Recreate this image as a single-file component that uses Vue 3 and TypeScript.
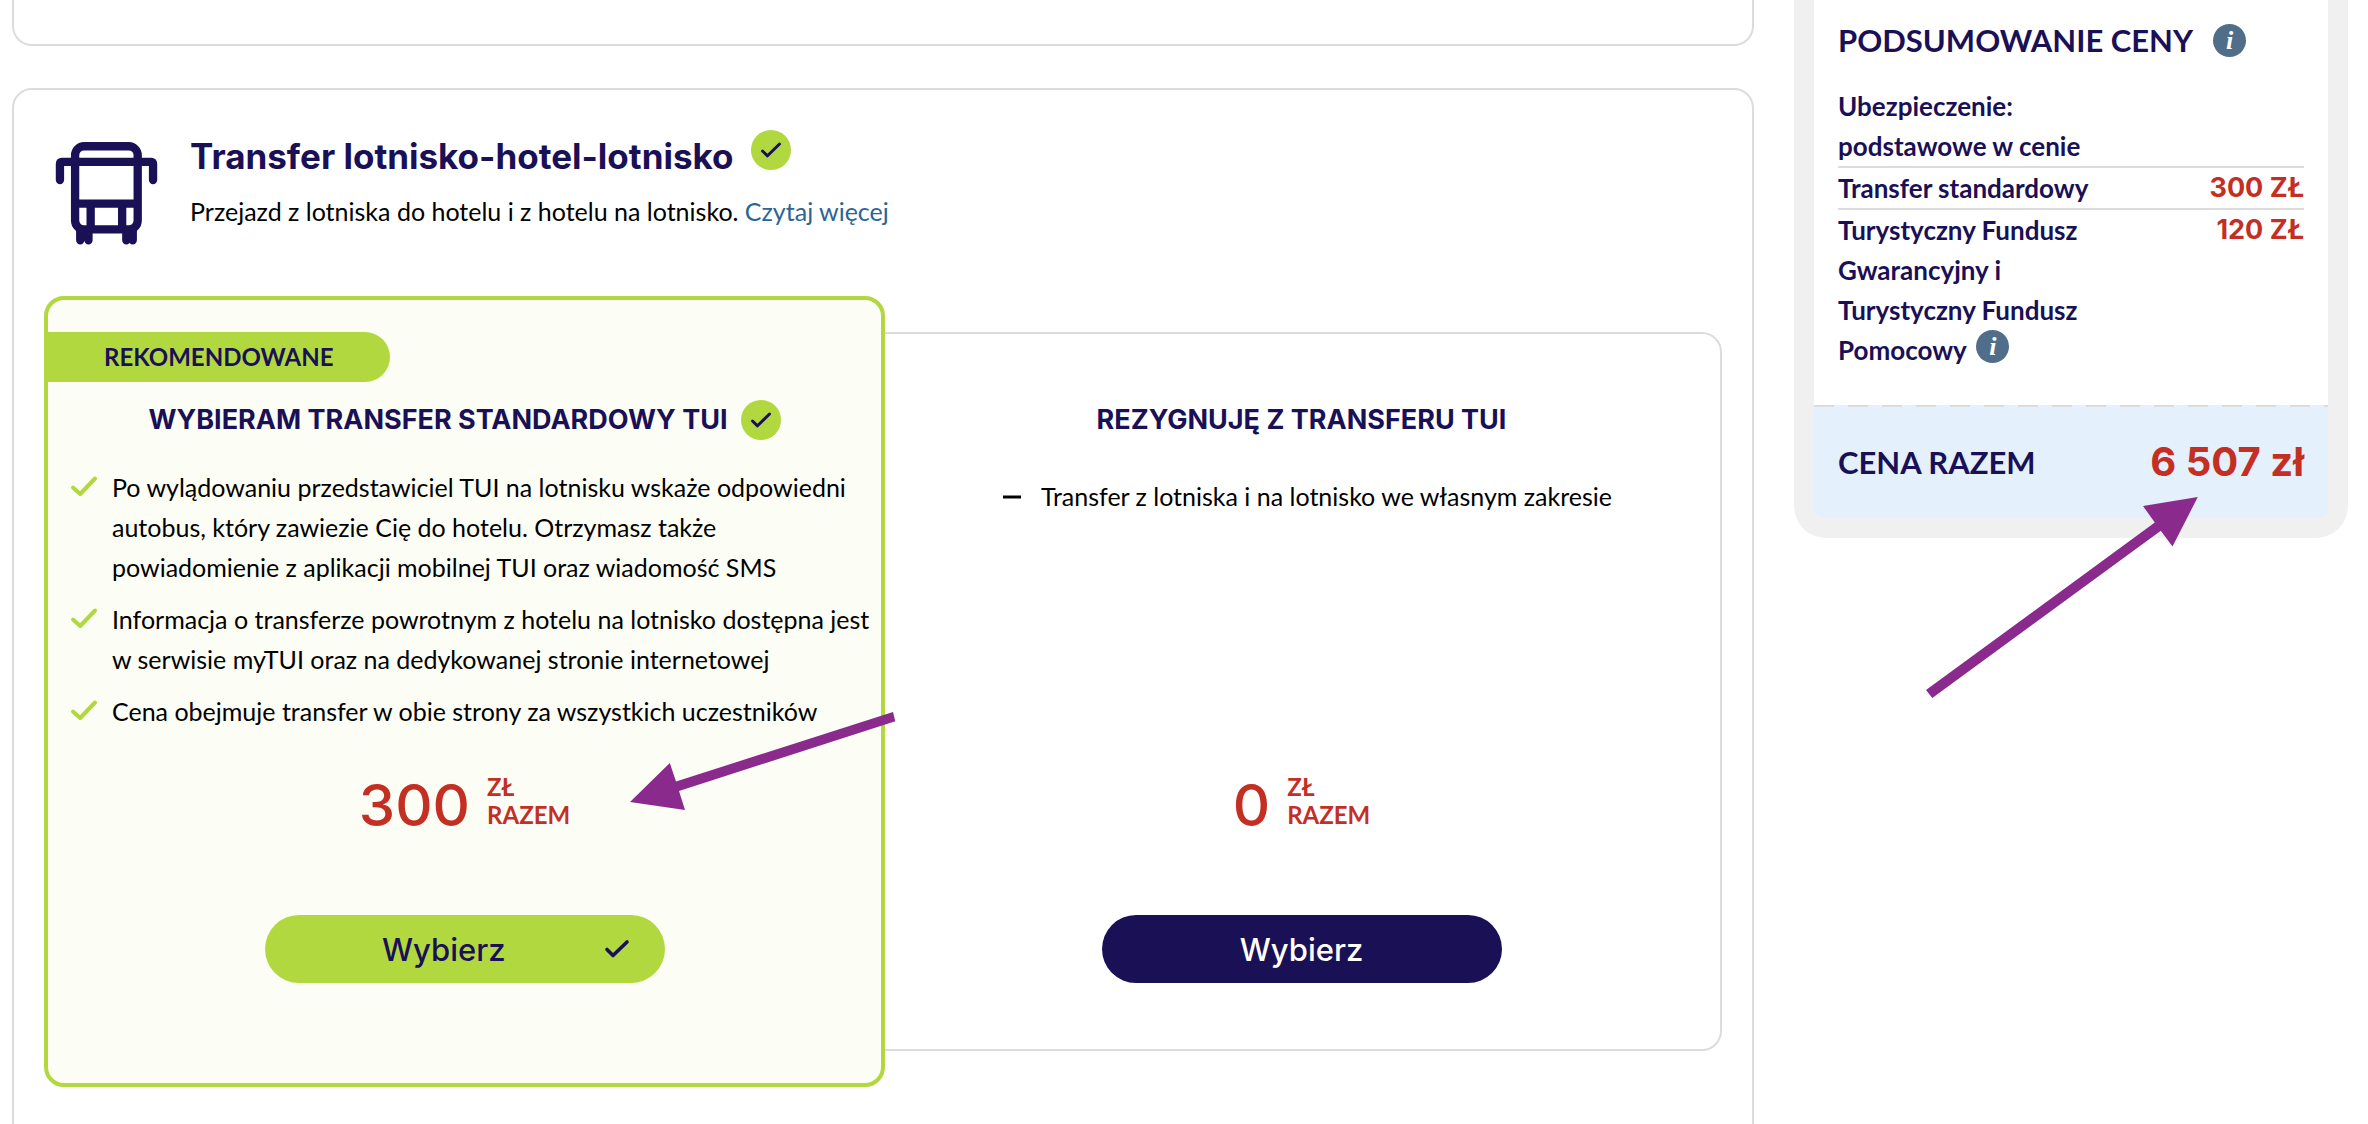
<script setup lang="ts">
interface TransferOption {
  id: string
  title: string
  recommended: boolean
  selected: boolean
  points: string[]
  price: string
}

interface PriceRow {
  label: string
  value: string
  info: boolean
}

const options: TransferOption[] = [
  {
    id: 'standard',
    title: 'WYBIERAM TRANSFER STANDARDOWY TUI',
    recommended: true,
    selected: true,
    points: [
      'Po wylądowaniu przedstawiciel TUI na lotnisku wskaże odpowiedni autobus, który zawiezie Cię do hotelu. Otrzymasz także powiadomienie z aplikacji mobilnej TUI oraz wiadomość SMS',
      'Informacja o transferze powrotnym z hotelu na lotnisko dostępna jest w serwisie myTUI oraz na dedykowanej stronie internetowej',
      'Cena obejmuje transfer w obie strony za wszystkich uczestników',
    ],
    price: '300',
  },
  {
    id: 'none',
    title: 'REZYGNUJĘ Z TRANSFERU TUI',
    recommended: false,
    selected: false,
    points: ['Transfer z lotniska i na lotnisko we własnym zakresie'],
    price: '0',
  },
]

const rows: PriceRow[] = [
  { label: 'Ubezpieczenie: podstawowe w cenie', value: '', info: false },
  { label: 'Transfer standardowy', value: '300 ZŁ', info: false },
  { label: 'Turystyczny Fundusz Gwarancyjny i Turystyczny Fundusz Pomocowy', value: '120 ZŁ', info: true },
]
</script>

<template>
  <div class="page">
    <main class="content">
      <section class="card card-previous"></section>

      <section class="card card-transfer">
        <header class="intro">
          <svg class="bus" viewBox="15 20 105 105" aria-hidden="true">
            <g fill="none" stroke="#1a1056" stroke-width="8.4" stroke-linecap="round" stroke-linejoin="round">
              <rect x="35.3" y="25.3" width="63.2" height="84" rx="9" />
              <path d="M20 59.5V43q0-2 2-2h90q2 0 2 2v16.500" />
              <path d="M36 83.300h62M51 84v25M82.800 84v25" stroke-linecap="butt" />
              <path d="M40.500 110v10.200M48.800 110v10.200M87 110v10.200M93.500 110v10.200" />
            </g>
          </svg>
          <div>
            <div class="intro-title">
              <h2>Transfer lotnisko-hotel-lotnisko</h2>
              <svg class="badge" viewBox="0 0 40 40" role="img" aria-label="Wybrano">
                <circle cx="20" cy="20" r="20" fill="#b2d840" />
                <path d="M11.500 21l5 4.800L28.500 14" />
              </svg>
            </div>
            <p class="intro-text">
              Przejazd z lotniska do hotelu i z hotelu na lotnisko. <a href="#">Czytaj więcej</a>
            </p>
          </div>
        </header>

        <div class="options">
          <article v-for="option in options" :key="option.id" class="option" :class="{ selected: option.selected }">
            <div v-if="option.recommended" class="ribbon">REKOMENDOWANE</div>
            <h3>
              {{ option.title }}
              <svg v-if="option.selected" class="badge" viewBox="0 0 40 40" role="img" aria-label="Wybrano">
                <circle cx="20" cy="20" r="20" fill="#b2d840" />
                <path d="M11.500 21l5 4.800L28.500 14" />
              </svg>
            </h3>
            <ul>
              <li v-for="point in option.points" :key="point">
                <svg v-if="option.selected" class="tick" viewBox="0 0 28 40" aria-hidden="true">
                  <path d="M3 20.500l7.200 6.500L25 11.500" fill="none" stroke="#b2d840" stroke-width="4" stroke-linecap="round" stroke-linejoin="round" />
                </svg>
                <svg v-else class="dash" viewBox="0 0 18 40" aria-hidden="true">
                  <path d="M0 21h18" stroke="#000" stroke-width="3" />
                </svg>
                <span>{{ point }}</span>
              </li>
            </ul>
            <div class="price">
              <strong>{{ option.price }}</strong>
              <span>ZŁ<br />RAZEM</span>
            </div>
            <button type="button" class="choose">
              Wybierz
              <svg v-if="option.selected" viewBox="0 0 26 20" aria-hidden="true">
                <path d="M3 10.500l6 6L23 3" fill="none" stroke="#1a1056" stroke-width="3.600" stroke-linecap="round" stroke-linejoin="round" />
              </svg>
            </button>
            <svg v-if="option.selected" class="arrow arrow-option" viewBox="0 0 290 130" aria-hidden="true">
              <path d="M10 102L49.800 63l6.200 18.500L273 12l2.300 9.300L59 91l6 19z" />
            </svg>
          </article>
        </div>
      </section>
    </main>

    <aside class="summary">
      <div class="summary-body">
        <div class="summary-title">
          <h2>PODSUMOWANIE CENY</h2>
          <button type="button" class="info" aria-label="Informacje o cenie">i</button>
        </div>
        <table>
          <tbody>
            <tr v-for="row in rows" :key="row.label">
              <th scope="row">
                {{ row.label }}
                <button v-if="row.info" type="button" class="info" aria-label="Informacje o funduszach">i</button>
              </th>
              <td>{{ row.value }}</td>
            </tr>
          </tbody>
        </table>
      </div>
      <div class="total">
        <span>CENA RAZEM</span>
        <strong>6 507 zł</strong>
      </div>
      <svg class="arrow arrow-total" viewBox="0 0 320 230" aria-hidden="true">
        <path d="M297.800 17L243 26l11.800 16.500L26 210l6.300 8L260.800 50.800 272.500 66.500z" />
      </svg>
    </aside>
  </div>
</template>

<style>
body {
  background: #fff;
}
</style>

<style scoped>
.page {
  box-sizing: border-box;
  display: grid;
  grid-template-columns: minmax(0, 1fr) 554px;
  align-items: start;
  gap: 40px;
  height: 100vh;
  overflow: hidden;
  padding: 0 20px 0 12px;
  color: #000;
  font-family: Lato, "Noto Sans", sans-serif;
  font-size: 25px;
  line-height: 40px;
}

h2,
h3,
p,
ul {
  margin: 0;
  padding: 0;
}

button {
  border: 0;
  padding: 0;
  cursor: pointer;
}

.card {
  box-sizing: border-box;
  border: 2px solid #dcdcdc;
  border-radius: 20px;
  background: #fff;
}

.card-previous {
  height: 46px;
  border-top: 0;
  border-radius: 0 0 20px 20px;
}

.card-transfer {
  margin-top: 42px;
  padding: 40px 30px 60px;
}

.intro {
  display: flex;
  gap: 31px;
  margin-bottom: 51px;
  padding-left: 11px;
}

.bus {
  flex: none;
  width: 104px;
  height: 104px;
  margin-top: 11px;
}

.intro-title {
  display: flex;
  gap: 17px;
}

.intro-title h2 {
  color: #1a1056;
  font-family: Inter, sans-serif;
  font-size: 35px;
  font-weight: 700;
  line-height: 52px;
}

.badge {
  flex: none;
  width: 40px;
  height: 40px;
}

.badge path {
  fill: none;
  stroke: #1a1056;
  stroke-width: 3;
  stroke-linecap: round;
  stroke-linejoin: round;
}

.intro-text {
  margin-top: 9px;
}

a {
  color: #2b6594;
  text-decoration: none;
}

.options {
  display: grid;
  grid-template-columns: 1fr 1fr;
}

.option {
  position: relative;
  display: flex;
  flex-direction: column;
  align-items: center;
  margin: 36px 0;
  padding: 66px 20px;
  border: 2px solid #dcdcdc;
  border-left: 0;
  border-radius: 0 20px 20px 0;
}

.option.selected {
  z-index: 1;
  margin: 0 -2px 0 0;
  padding: 32px 20px 100px;
  border: 4px solid #b2d840;
  border-radius: 20px;
  background: #fcfdf4;
}

.ribbon {
  align-self: flex-start;
  margin: 0 0 18px -20px;
  padding: 0 56px;
  border-radius: 0 25px 25px 0;
  background: #b2d840;
  color: #1a1056;
  font-size: 24px;
  font-weight: 700;
  line-height: 50px;
}

h3 {
  display: flex;
  justify-content: center;
  gap: 13px;
  color: #1a1056;
  font-family: Inter, sans-serif;
  font-size: 27px;
  font-weight: 700;
}

.option ul {
  display: flex;
  flex-direction: column;
  gap: 12px;
  margin-top: 36px;
  padding-left: 12px;
  list-style: none;
}

.selected ul {
  align-self: stretch;
  margin-top: 27px;
  padding-left: 0;
}

li {
  display: flex;
  gap: 20px;
}

.selected li {
  gap: 14px;
  margin-right: -10px;
}

.tick {
  flex: none;
  width: 28px;
  height: 40px;
}

.selected .tick {
  margin-left: 2px;
}

.dash {
  flex: none;
  width: 18px;
  height: 40px;
}

.price {
  display: flex;
  align-items: center;
  gap: 17px;
  margin-top: auto;
  color: #c42f24;
}

.selected .price {
  margin-top: 42px;
}

.price strong {
  padding-top: 8px;
  font-family: Inter, sans-serif;
  font-size: 58px;
  font-weight: 500;
  line-height: 48px;
}

.price span {
  font-size: 24px;
  font-weight: 700;
  line-height: 28px;
}

.choose {
  display: flex;
  align-items: center;
  justify-content: center;
  gap: 98px;
  box-sizing: border-box;
  width: 400px;
  height: 68px;
  margin-top: 86px;
  border-radius: 34px;
  background: #1a1056;
  color: #fff;
  font-family: Inter, sans-serif;
  font-size: 31px;
  font-weight: 500;
}

.selected .choose {
  justify-content: flex-end;
  padding-right: 35px;
  background: #b2d840;
  color: #1a1056;
}

.choose svg {
  width: 26px;
  height: 20px;
}

.arrow {
  position: absolute;
  fill: #892a8c;
  pointer-events: none;
}

.arrow-option {
  right: -29px;
  bottom: 253px;
  width: 290px;
  height: 130px;
}

.arrow-total {
  right: 128px;
  bottom: -172px;
  width: 320px;
  height: 230px;
}

.summary {
  position: relative;
  padding: 0 20px 20px;
  border-radius: 0 0 32px 32px;
  background: #f0f0f0;
  color: #1a1056;
}

.summary-body {
  padding: 20px 24px 35px;
  background: #fff;
}

.summary-title {
  display: flex;
  align-items: center;
  gap: 20px;
  margin-bottom: 26px;
}

.summary h2,
.total span {
  font-size: 31px;
  font-weight: 700;
  line-height: 40px;
}

.info {
  width: 33px;
  height: 33px;
  border-radius: 50%;
  background: #506e8a;
  color: #fff;
  font: italic 700 26px/33px "Liberation Serif", serif;
  text-align: center;
}

th .info {
  margin-left: 4px;
  vertical-align: top;
}

table {
  width: 100%;
  border-collapse: collapse;
}

tr + tr {
  border-top: 2px solid #dcdcdc;
}

th,
td {
  padding: 0;
  vertical-align: top;
}

th {
  width: 56%;
  font-size: 26px;
  font-weight: 700;
  text-align: left;
}

td {
  color: #c42f24;
  font-family: Inter, sans-serif;
  font-size: 27px;
  font-weight: 700;
  text-align: right;
}

.total {
  display: flex;
  align-items: center;
  justify-content: space-between;
  padding: 37px 24px 36px;
  border-radius: 0 0 10px 10px;
  background: repeating-linear-gradient(90deg, #dcdcdc 0 20px, transparent 20px 34px) top / 100% 2px no-repeat #e4f0fc;
}

.total strong {
  color: #c42f24;
  font-family: Inter, sans-serif;
  font-size: 40px;
  font-weight: 700;
}
</style>
